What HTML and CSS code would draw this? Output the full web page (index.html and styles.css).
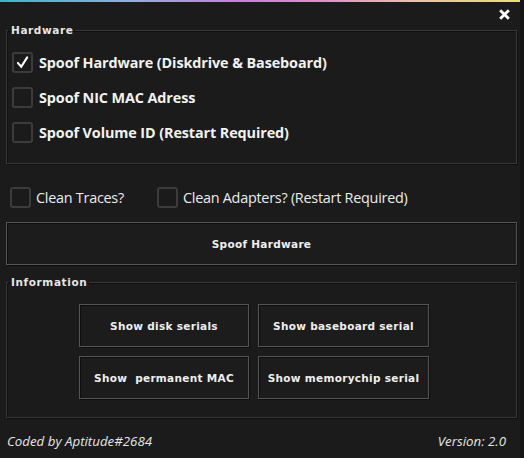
FILE: index.html
```html
<!DOCTYPE html>
<html lang="en">
<head>
    <meta charset="UTF-8">
    <title>Spoofer</title>
    <link rel="stylesheet" href="styles.css">
</head>
<body>
    <div class="window">
        <div class="rainbow"></div>
        <div class="titlebar">
            <svg class="close" viewBox="0 0 12 12"><path d="M2 2 L10 10 M10 2 L2 10"/></svg>
        </div>

        <fieldset class="group hardware">
            <legend>Hardware</legend>
            <label class="check big"><span class="box checked"><svg viewBox="0 0 20 20"><path d="M4.5 10.5 L8.5 15 L15.5 4"/></svg></span>Spoof Hardware (Diskdrive &amp; Baseboard)</label>
            <label class="check big"><span class="box"></span>Spoof NIC MAC Adress</label>
            <label class="check big"><span class="box"></span>Spoof Volume ID (Restart Required)</label>
        </fieldset>

        <div class="options">
            <label class="check small"><span class="box"></span>Clean Traces?</label>
            <label class="check small"><span class="box"></span>Clean Adapters? (Restart Required)</label>
        </div>

        <button class="btn main-btn">Spoof Hardware</button>

        <fieldset class="group info">
            <legend>Information</legend>
            <div class="btn-grid">
                <button class="btn">Show disk serials</button>
                <button class="btn">Show baseboard serial</button>
                <button class="btn">Show&nbsp; permanent MAC</button>
                <button class="btn">Show memorychip serial</button>
            </div>
        </fieldset>

        <div class="footer">
            <span>Coded by Aptitude#2684</span>
            <span>Version: 2.0</span>
        </div>
    </div>
</body>
</html>
```

FILE: styles.css
```css
body {
    margin: 0;
    background-color: #1b1b1b;
    font-family: "Open Sans", "Noto Sans", sans-serif;
    color: #f2f2f2;
}
.window {
    width: 524px;
    height: 458px;
    background: #1b1b1b;
    box-sizing: border-box;
    border-right: 4px solid #151515;
    overflow: hidden;
}
.rainbow {
    height: 2px;
    background: linear-gradient(to right, #3ab6c8, #8fb0e0 25%, #c97fe0 45%, #e08ad0 60%, #f0c0a8 80%, #e8e070);
}
.titlebar {
    height: 20px;
    display: flex;
    justify-content: flex-end;
    padding-right: 9px;
}
.close {
    width: 13px;
    height: 13px;
    margin-top: 6px;
}
.close path {
    stroke: #fff;
    stroke-width: 2.6;
    fill: none;
}
.group {
    margin: 0 0 0 6px;
    border: 1px solid #383838;
    box-shadow: inset 1px 1px 0 #0f0f0f, 1px 1px 0 #0f0f0f;
    padding: 0;
}
.group legend {
    font-family: "DejaVu Sans", sans-serif;
    font-weight: bold;
    font-size: 10.5px;
    letter-spacing: 0.6px;
    color: #e6e6e6;
    padding: 0 2px 0 3px;
    margin-left: 1px;
}
.hardware {
    width: 504px;
    height: 122px;
    margin-top: 2px;
    display: flex;
    flex-direction: column;
    gap: 14px;
    padding: 16px 0 0 5px;
    box-sizing: content-box;
}
.hardware legend {
    margin-left: -4px;
}
.check {
    display: flex;
    align-items: center;
}
.box {
    width: 17px;
    height: 17px;
    border: 2px solid #3c3c3c;
    border-radius: 3px;
    display: inline-block;
    flex: none;
}
.box svg {
    width: 17px;
    height: 17px;
}
.box svg path {
    fill: none;
    stroke: #fff;
    stroke-width: 2.4;
    stroke-linecap: round;
}
.big {
    font-weight: bold;
    font-size: 14.4px;
    letter-spacing: -0.1px;
    gap: 6px;
    height: 21px;
}
.small {
    font-size: 14.4px;
    letter-spacing: -0.25px;
    color: #ececec;
    gap: 5px;
    height: 21px;
}
.options {
    display: flex;
    gap: 33px;
    margin: 23px 0 0 10px;
}
.btn {
    display: block;
    background: #1c1c1c;
    border: 1px solid #545454;
    box-shadow: inset 1px 1px 0 #0e0e0e, 1px 1px 0 #0e0e0e;
    color: #efefef;
    font-family: "DejaVu Sans", sans-serif;
    font-weight: bold;
    font-size: 10.5px;
    letter-spacing: 0.3px;
    padding: 0;
}
.main-btn {
    width: 511px;
    height: 43px;
    margin: 14px 0 0 6px;
}
.info {
    width: 509px;
    margin-top: 11px;
    padding-bottom: 18px;
}
.btn-grid {
    display: grid;
    grid-template-columns: 170px 171px;
    grid-auto-rows: 43px;
    gap: 9px 9px;
    padding: 16px 0 0 72px;
}
.btn-grid .btn {
    width: 100%;
    height: 100%;
}
.footer {
    display: flex;
    justify-content: space-between;
    padding: 14px 14px 0 7px;
    font-style: italic;
    font-size: 13.3px;
    color: #e6e6e6;
}
```
